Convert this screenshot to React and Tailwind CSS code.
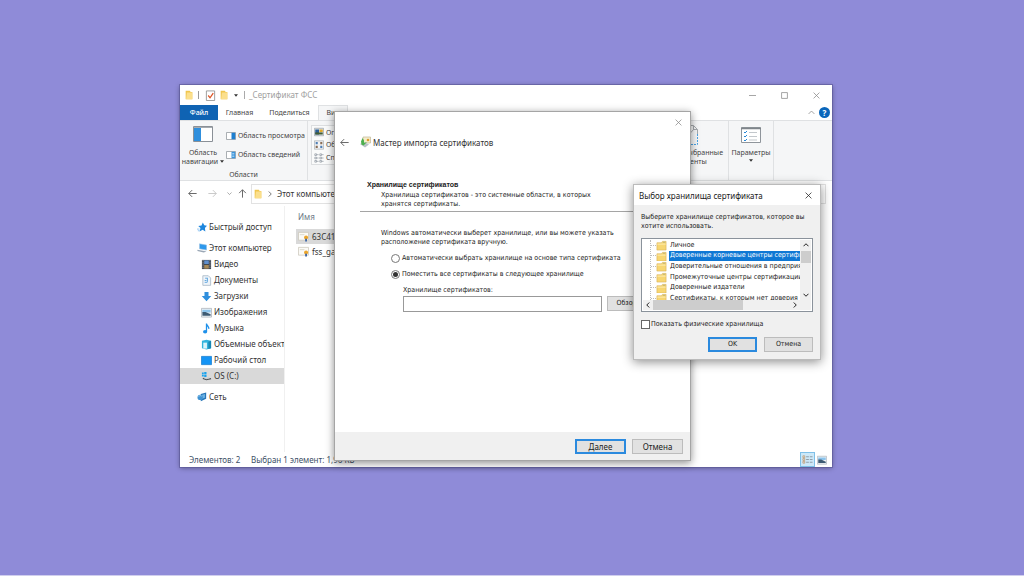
import React, { useState } from "react";
import clsx from "clsx";

const places = [
  { name: "Видео", icon: "video" },
  { name: "Документы", icon: "docs" },
  { name: "Загрузки", icon: "download" },
  { name: "Изображения", icon: "picture" },
  { name: "Музыка", icon: "music" },
  { name: "Объемные объекты", icon: "cube" },
  { name: "Рабочий стол", icon: "desktop" },
  { name: "OS (C:)", icon: "drive" },
];

const stores = [
  "Личное",
  "Доверенные корневые центры сертификации",
  "Доверительные отношения в предприятии",
  "Промежуточные центры сертификации",
  "Доверенные издатели",
  "Сертификаты, к которым нет доверия",
];

const drawings = {
  star: (
    <>
      <path d="M7 .5 8.700 4 12 4.600 9.500 7.200 10 11.300 6.800 9.200 3 11.300 4.200 7.200 1.500 4.800 5.400 4.300z" fill="#1d86dd" />
      <path d="M0 8.500h3M1 10.500h2" stroke="#7fbdf0" />
    </>
  ),
  computer: (
    <>
      <path d="M3 1 11.500 2.500v6L3 7z" fill="#2d98ec" stroke="#9cc3e4" strokeWidth=".7" />
      <path d="m.5 8 6.500 1.200 4.500 1-3.500 1.300L.5 9.500z" fill="#9aa7b5" />
    </>
  ),
  video: (
    <>
      <path d="M1 1h10v10H1z" fill="#3d4550" />
      <path d="M3.5 1.5h5v4h-5z" fill="#5f8fce" />
      <path d="M3.5 6.5h5v4h-5z" fill="#a88a58" />
      <path d="M2.2 1v10M9.8 1v10" stroke="#c8ccd2" strokeDasharray="1 1" strokeWidth=".8" />
    </>
  ),
  docs: (
    <>
      <path d="M2 .8h6l2.5 2.5v8H2z" fill="#eef4fa" stroke="#9fb0c0" strokeWidth=".8" />
      <path d="M4.500 3.500h3M7 3.500v4M4 6h2M4 8h3" stroke="#5ba3dc" />
    </>
  ),
  download: <path d="M3.800 1h4.400v4.500h3L6 11.300.8 5.500h3z" fill="#2f8fdd" />,
  picture: (
    <>
      <path d="M.5 1.500h11v9.500H.5z" fill="#eef2f5" stroke="#a8b0b8" strokeWidth=".8" />
      <path d="M1.500 3h9v3h-9z" fill="#8cc4ec" />
      <path d="M1.500 5.500 5 5.500l5.500 2.500V9.500h-9z" fill="#3e5b73" />
    </>
  ),
  music: (
    <>
      <path d="M6 .5v8.500M6 1c.5 2.500 3 2.500 2.500 5.500" fill="none" stroke="#1e90ea" strokeWidth="1.400" />
      <ellipse cx="4.500" cy="9.500" rx="2.300" ry="1.900" fill="#1e90ea" />
    </>
  ),
  cube: (
    <>
      <path d="m1 2 5-1.200 5 1.200v8l-5 1.500-5-1.500z" fill="#31b4dd" />
      <path d="M2.500 4h4v6.500h-4z" fill="#d9f4fb" />
      <path d="m8 3 3-1v8l-3 1z" fill="#1787b4" />
    </>
  ),
  desktop: <path d="M.5 1.500h11v9H.5z" fill="#1494f5" stroke="#0b73c9" strokeWidth=".7" />,
  drive: (
    <>
      <path d="M1 1.500h2v2H1zM3.500 1h2.500v2.500H3.500zM1 4h2v2H1zM3.500 4h2.500v2.500H3.500z" fill="#18a2ee" />
      <path d="m2 8 4 1.500 5-1.200" fill="none" stroke="#4d5359" strokeWidth="1.300" />
      <path d="m2 6.800 4 1.500 3-.8" fill="none" stroke="#c2c8cd" />
    </>
  ),
  network: (
    <>
      <path d="m4.500 2.500 6.500-2v7.500l-6.500 3z" fill="#2675b8" />
      <path d="m5.500 3.500 4-1.200v4.500l-4 1.500z" fill="#6fb4e4" />
      <circle cx="3.800" cy="6.500" r="3.200" fill="#3f92d2" />
      <path d="M2 5.500c1-1.500 2.500-1.500 3.500-.5" fill="none" stroke="#a9d6f3" />
    </>
  ),
  folder: (
    <>
      <path d="M2 1h5l1 1.500h2V11H2z" fill="#f0c64f" />
      <path d="M3.500 3H10v8H2.500z" fill="#fbdf8c" />
    </>
  ),
  storeFolder: (
    <>
      <path d="M1 3h5l1-1.500h4V11H1z" fill="#f7d672" stroke="#d4ad50" strokeWidth=".6" />
      <path d="M7.500 2.500h2.500" stroke="#b9b27a" />
      <path d="M1.500 4.500h9" stroke="#fdeeb5" />
    </>
  ),
  cert: (
    <>
      <path d="M.5 1.500h11v8.500H.5z" fill="#fbfaf6" stroke="#c9c5b8" strokeWidth=".8" />
      <path d="M2 4h5" stroke="#dad6c8" />
      <circle cx="8.800" cy="7" r="2.200" fill="#eba52b" />
      <path d="M7.800 8.500h2V11.500h-2z" fill="#3c66a8" />
    </>
  ),
  wizard: (
    <>
      <path d="M4 1h7.500v6H4z" fill="#f4ecca" stroke="#bfb798" strokeWidth=".7" />
      <path d="M1 8 5 6l5 2.500-4 3z" fill="#b9c2c6" />
      <path d="M2 5.500 3.500 2 5 4.500V7L8 6 4.500 9.500 2.500 8.500z" fill="#4db04d" />
      <circle cx="9" cy="4" r="1.300" fill="#dc9c32" />
    </>
  ),
  check: (
    <>
      <path d="M1.500 1h9v10.500h-9z" fill="#fff" stroke="#8d8d8d" strokeWidth=".9" />
      <path d="m3.500 6 2 2.500L9 3.500" fill="none" stroke="#dd5526" strokeWidth="1.400" />
    </>
  ),
  details: (
    <>
      <path d="M1 2h2v2H1zM1 5h2v2H1zM1 8h2v2H1z" fill="none" stroke="#c39464" strokeWidth=".8" />
      <path d="M4.500 3h3M8.500 3h3M4.500 6h3M8.500 6h3M4.500 9h3M8.500 9h3" stroke="#8a97a2" />
    </>
  ),
  list: (
    <path
      d="M1 1h2v2H1zM1 5h2v2H1zM1 9h2v2H1zM7 1h2v2H7zM7 5h2v2H7zM7 9h2v2H7zM3.500 2h2M3.500 6h2M3.500 10h2M9.500 2h2M9.500 6h2M9.500 10h2"
      fill="none"
      stroke="#87909a"
      strokeWidth=".8"
    />
  ),
  tiles: (
    <>
      <path d="M.5 1h11v10H.5z" fill="#f2f3f4" stroke="#a2a7ac" strokeWidth=".8" />
      <path d="M2 2.500h2.500v2.500H2zM7.500 7h2.500v2.500H7.500z" fill="#4f7fb4" />
      <path d="M7.500 2.500h2.500v2.500H7.500zM2 7h2.500v2.500H2z" fill="#8a6e55" />
    </>
  ),
  large: (
    <>
      <path d="M.5 1.500h11v9H.5z" fill="#dfe7ed" stroke="#969ca2" strokeWidth=".8" />
      <path d="M1.500 3h4.500v6H1.500z" fill="#2b5e94" />
      <path d="M6.500 3h4v3h-4z" fill="#e0a92c" />
      <path d="M1.500 6.500h9V9h-9z" fill="#425c33" />
    </>
  ),
};

function Icon({ name, className = "size-3" }) {
  return (
    <svg viewBox="0 0 12 12" className={clsx("shrink-0", className)} aria-hidden="true">
      {drawings[name]}
    </svg>
  );
}

function Line({ d, className }) {
  return (
    <svg viewBox="0 0 12 12" className={clsx("shrink-0", className)} fill="none" stroke="currentColor" strokeWidth="1.300" aria-hidden="true">
      <path d={d} />
    </svg>
  );
}

const CROSS = "m1 1 10 10M11 1 1 11";
const BACK = "M11.500 6H1M5.500 1.500 1 6l4.500 4.500";
const FORWARD = "M.5 6H11M6.500 1.500 11 6l-4.500 4.500";
const UP = "M6 11.500V1M1.500 5.500 6 1l4.500 4.500";
const CHEVRON_UP = "m1 8.500 5-5 5 5";
const CHEVRON_DOWN = "m1 3.500 5 5 5-5";
const CHEVRON_LEFT = "m8.500 1-5 5 5 5";
const CHEVRON_RIGHT = "m3.500 1 5 5-5 5";

function PaneIcon({ right }) {
  return (
    <svg viewBox="0 0 20 16" className="h-2 w-[10px] shrink-0" aria-hidden="true">
      <path d="M1 1h18v14H1z" fill="#fff" stroke="#8f959b" strokeWidth="1.500" />
      <path d="M11 1.500h7.500v13H11z" fill={right ? "#3b96dd" : "#1d7fd0"} />
      {right && <path d="M12.500 5h4M12.500 8h4M12.500 11h4" stroke="#fff" />}
    </svg>
  );
}

function Caret() {
  return (
    <svg viewBox="0 0 6 4" className="h-[3px] w-1 shrink-0" aria-hidden="true">
      <path d="M0 0h6L3 4z" fill="#333" />
    </svg>
  );
}

function Ribbon() {
  return (
    <div className="flex h-[61px] border-y border-[#dfe1e3] bg-[#f5f6f7] text-[7px] leading-[9px] text-[#444]">
      <div className="flex w-32 flex-col border-r border-[#dfe1e3]">
        <div className="flex flex-1 pt-[5px]">
          <button className="flex w-[46px] flex-col items-center whitespace-nowrap">
            <svg viewBox="0 0 20 16" className="mb-[6px] h-4 w-5" aria-hidden="true">
              <path d="M.5.5h19v15H.5z" fill="#fff" stroke="#8a9097" />
              <path d="M1 1h7v14H1z" fill="#2f8fdd" />
              <path d="M1 1.500h18" stroke="#a5abb1" />
            </svg>
            <span>Область</span>
            <span className="flex items-center gap-[2px]">навигации <Caret /></span>
          </button>
          <div className="flex flex-col gap-[10px] whitespace-nowrap pt-[5px]">
            <button className="flex items-center gap-[2px]"><PaneIcon /> Область просмотра</button>
            <button className="flex items-center gap-[2px]"><PaneIcon right /> Область сведений</button>
          </div>
        </div>
        <span className="pb-px text-center">Области</span>
      </div>
      <div className="ml-[3px] mt-1 flex h-10 w-20 flex-col justify-around overflow-hidden border border-[#dcdee0] bg-[#fafbfb] pl-[2px] text-left">
        <button className="flex items-center gap-[2px] whitespace-nowrap"><Icon name="large" className="size-[10px]" /> Огромные значки</button>
        <button className="flex items-center gap-[2px] whitespace-nowrap"><Icon name="tiles" className="size-[10px]" /> Обычные значки</button>
        <button className="flex items-center gap-[2px] whitespace-nowrap"><Icon name="list" className="size-[10px]" /> Список</button>
      </div>
      <div className="flex-1" />
      <button className="mr-[5px] flex w-[66px] flex-col items-center whitespace-nowrap pt-1">
        <svg viewBox="0 0 16 20" className="mb-[3px] h-5 w-4" fill="none" aria-hidden="true">
          <path d="M.5.5h11l4 4V9" stroke="#a5a9ad" />
          <path d="M11.500.5v4h4M3 14 12 4" stroke="#a5a9ad" />
          <path d="M15.500 9v10.500H.5V.5" stroke="#4ba3e3" strokeDasharray="2 1" />
        </svg>
        <span>Скрыть выбранные</span>
        <span>элементы</span>
      </button>
      <button className="flex w-[46px] flex-col items-center border-x border-[#dfe1e3] pt-[6px]">
        <svg viewBox="0 0 20 16" className="mb-[5px] h-4 w-5" fill="none" aria-hidden="true">
          <path d="M.5.5h19v15H.5z" fill="#fff" stroke="#8f959b" />
          <path d="M0 1.500h20" stroke="#7f858b" strokeWidth="1.500" />
          <path d="m3 5 1 1 2-2M3 9l1 1 2-2M3 13l1 1 2-2" stroke="#2787d6" />
          <path d="M8 5.500h8M8 9.500h8M8 13h8" stroke="#c3c8cc" />
        </svg>
        <span className="mb-[2px]">Параметры</span>
        <Caret />
      </button>
      <div className="w-[58px]" />
    </div>
  );
}

function Explorer({ children }) {
  return (
    <section className="relative bg-white font-['Noto_Sans',sans-serif] text-[8px] leading-[10px] text-[#333] shadow-[0_0_0_1px_rgba(90,86,150,0.6),0_1px_5px_rgba(0,0,0,0.4)]">
      <header className="flex h-5 items-center pl-1">
        <Icon name="folder" className="size-[10px]" />
        <span className="ml-1 h-2 border-l border-[#999]" />
        <Icon name="check" className="ml-[6px] size-[11px]" />
        <Icon name="folder" className="ml-[3px] size-[10px]" />
        <span className="ml-[5px]"><Caret /></span>
        <span className="ml-[6px] h-2 border-l border-[#aaa]" />
        <h1 className="ml-1 flex-1 text-[#a0a0a0]">_Сертификат ФСС</h1>
        <div className="flex items-center gap-[25px] pr-3 text-[#8a8a8a]">
          <button aria-label="Свернуть"><Line d="M0 6h12" className="size-[7px]" /></button>
          <button aria-label="Развернуть"><Line d="M1 1h10v10H1z" className="size-[7px]" /></button>
          <button aria-label="Закрыть"><Line d={CROSS} className="size-[7px]" /></button>
        </div>
      </header>

      <nav className="flex h-[15px] items-stretch text-[7px] text-[#444]">
        <button className="w-[38px] bg-[#0f63b3] font-medium text-white">Файл</button>
        <button className="w-[43px]">Главная</button>
        <button className="w-[57px]">Поделиться</button>
        <button className="w-[30px] border-x border-t border-[#dfe1e3] bg-[#f5f6f7]">Вид</button>
        <div className="flex flex-1 items-center justify-end gap-1 pr-[2px]">
          <Line d={CHEVRON_UP} className="size-[7px] text-[#888]" />
          <button className="size-[11px] rounded-full bg-[#0a66bb] text-[8px] font-bold leading-[11px] text-white">?</button>
        </div>
      </nav>

      <Ribbon />

      <div className="flex h-[25px] items-center pl-2 pr-[6px] text-[#666]">
        <Line d={BACK} className="size-[9px]" />
        <Line d={FORWARD} className="ml-[11px] size-[9px] text-[#c8c8c8]" />
        <Line d={CHEVRON_DOWN} className="ml-[10px] size-[5px]" />
        <Line d={UP} className="ml-[6px] size-[9px]" />
        <div className="ml-1 flex h-5 flex-1 items-center gap-1 border border-[#e2e2e2] pl-px text-[#333]">
          <Icon name="folder" className="size-[10px]" />
          <Line d={CHEVRON_RIGHT} className="size-[6px]" />
          <span>Этот компьютер</span>
        </div>
        <div className="ml-1 h-5 w-32 border border-[#e2e2e2]" />
      </div>

      <div className="flex min-h-[246px]">
        <aside className="w-[105px] border-r border-[#f0f0f0] pt-[13px]">
          <a href="#quick" className="flex h-4 items-center gap-[2px] pl-[17px]"><Icon name="star" className="size-[10px]" /> Быстрый доступ</a>
          <a href="#pc" className="mt-[5px] flex h-4 items-center gap-[2px] pl-[17px]"><Icon name="computer" className="size-[10px]" /> Этот компьютер</a>
          <ul>
            {places.map((p) => (
              <li key={p.name}>
                <a
                  href={`#${p.icon}`}
                  className={clsx("flex h-4 items-center gap-[2px] overflow-hidden whitespace-nowrap pl-[21px]", p.icon === "drive" && "bg-[#d9d9d9]")}
                >
                  <Icon name={p.icon} className="size-[11px]" /> {p.name}
                </a>
              </li>
            ))}
          </ul>
          <a href="#net" className="mt-[5px] flex h-4 items-center gap-[2px] pl-[17px]"><Icon name="network" className="size-[10px]" /> Сеть</a>
        </aside>
        <div className="flex-1 pl-[11px] pr-20 pt-[5px]">
          <table className="w-full">
            <thead>
              <tr><th className="h-[18px] pl-[2px] pt-px text-left align-top font-normal text-[#6b7785]">Имя</th></tr>
            </thead>
            <tbody>
              <tr className="bg-[#d9d9d9]">
                <td className="h-[15px] pl-[2px]"><span className="flex items-center gap-[3px]"><Icon name="cert" className="size-[11px]" />63C4195E.cer</span></td>
              </tr>
              <tr>
                <td className="h-[15px] pl-[2px]"><span className="flex items-center gap-[3px]"><Icon name="cert" className="size-[11px]" />fss_gate.cer</span></td>
              </tr>
            </tbody>
          </table>
        </div>
      </div>

      <footer className="flex h-[15px] items-center pl-[9px] text-[#3c4f66]">
        <span className="w-[62px]">Элементов: 2</span>
        <span className="flex-1">Выбран 1 элемент: 1,96 КБ</span>
        <button aria-label="Таблица" className="flex h-[15px] w-[15px] items-center justify-center border border-[#7fc0e8] bg-[#cce8f8]"><Icon name="details" className="size-[11px]" /></button>
        <button aria-label="Эскизы" className="ml-[2px] mr-[5px]"><Icon name="picture" className="size-[10px]" /></button>
      </footer>
      {children}
    </section>
  );
}

function DialogButton({ primary, className, children }) {
  return (
    <button
      className={clsx(
        "h-[15px] whitespace-nowrap bg-[#e1e1e1] text-[#222]",
        primary ? "border-2 border-[#2b8ade]" : "border border-[#bcbcbc]",
        className
      )}
    >
      {children}
    </button>
  );
}

function Radio({ id, checked, onChange, children }) {
  return (
    <label htmlFor={id} className="flex h-4 items-center gap-[2px]">
      <input
        id={id}
        type="radio"
        name="store"
        checked={checked}
        onChange={onChange}
        className="size-[9px] shrink-0 appearance-none rounded-full border border-[#777] bg-white bg-clip-content p-px checked:bg-[#333]"
      />
      {children}
    </label>
  );
}

function ImportWizard() {
  const [mode, setMode] = useState("manual");

  return (
    <section className="absolute left-[154px] top-[26px] w-[357px] border border-[#a5a5a5] bg-white font-['DejaVu_Sans_Condensed','DejaVu_Sans',sans-serif] text-[7px] leading-[9px] text-[#222] shadow-[0_2px_8px_rgba(0,0,0,0.45)]">
      <div className="flex h-5 items-center justify-end pr-2">
        <button aria-label="Закрыть" className="text-[#8a8a8a]"><Line d={CROSS} className="size-[7px]" /></button>
      </div>
      <div className="flex h-5 items-center pl-[5px] font-['Noto_Sans',sans-serif] text-[8px] text-[#333]">
        <button aria-label="Назад"><Line d={BACK} className="size-[9px] text-[#666]" /></button>
        <Icon name="wizard" className="ml-[10px] size-3" />
        <h2 className="ml-[2px]">Мастер импорта сертификатов</h2>
      </div>

      <div className="ml-[25px] mt-7 border-b border-[#a5a5a5] pb-[2px] pl-[7px]">
        <h3 className="font-['Liberation_Sans',sans-serif] font-bold">Хранилище сертификатов</h3>
        <p className="ml-[14px] mt-[2px]">
          Хранилища сертификатов - это системные области, в которых
          <br />
          хранятся сертификаты.
        </p>
      </div>

      <div className="mt-[17px] h-[203px] pl-[46px]">
        <p>
          Windows автоматически выберет хранилище, или вы можете указать
          <br />
          расположение сертификата вручную.
        </p>
        <div className="ml-[10px] mt-[3px] whitespace-nowrap">
          <Radio id="auto" checked={mode === "auto"} onChange={() => setMode("auto")}>
            Автоматически выбрать хранилище на основе типа сертификата
          </Radio>
          <Radio id="manual" checked={mode === "manual"} onChange={() => setMode("manual")}>
            Поместить все сертификаты в следующее хранилище
          </Radio>
          <div className="ml-3 mt-1">
            <label htmlFor="storeName" className="block">Хранилище сертификатов:</label>
            <div className="mt-px flex gap-[5px]">
              <input id="storeName" type="text" className="h-4 w-[199px] border border-[#999] bg-white px-1" />
              <DialogButton className="w-[45px]">Обзор...</DialogButton>
            </div>
          </div>
        </div>
      </div>

      <footer className="flex h-7 items-center justify-end gap-[6px] bg-[#f0f0f0] pr-[7px] font-['Noto_Sans',sans-serif] text-[8px]">
        <DialogButton primary className="w-[51px]">Далее</DialogButton>
        <DialogButton className="w-[51px]">Отмена</DialogButton>
      </footer>
    </section>
  );
}

function StoreDialog() {
  const [selected, setSelected] = useState(1);

  return (
    <section className="absolute left-[453px] top-[99px] w-[188px] border border-[#bbb] bg-[#f0f0f0] font-['DejaVu_Sans_Condensed','DejaVu_Sans',sans-serif] text-[7px] leading-[9px] text-[#222] shadow-[0_2px_10px_rgba(0,0,0,0.45)]">
      <header className="flex h-5 items-center justify-between bg-white pl-[5px] pr-2 font-['Noto_Sans',sans-serif] text-[8px]">
        <h2>Выбор хранилища сертификата</h2>
        <button aria-label="Закрыть"><Line d={CROSS} className="size-[7px]" /></button>
      </header>
      <div className="px-[7px] pb-[7px] pt-2">
        <p>
          Выберите хранилище сертификатов, которое вы
          <br />
          хотите использовать.
        </p>
        <div className="mt-[7px] border border-[#8a929b] bg-white p-px">
          <div className="flex h-[60px]">
            <ul className="ml-[7px] grid h-16 flex-1 grid-rows-6 overflow-hidden border-l border-dotted border-[#bbb] [clip-path:inset(0_0_4px_0)]">
              {stores.map((name, i) => (
                <li key={name} className="flex min-w-0 items-center overflow-hidden">
                  <span className="w-[5px] shrink-0 border-t border-dotted border-[#bbb]" />
                  <Icon name="storeFolder" className="size-[11px]" />
                  <button
                    onClick={() => setSelected(i)}
                    className={clsx("ml-[2px] h-full w-0 flex-1 overflow-hidden whitespace-nowrap pl-px text-left", selected === i && "bg-[#0f78d4] text-white")}
                  >
                    {name}
                  </button>
                </li>
              ))}
            </ul>
            <div className="flex w-[11px] flex-col items-center justify-between bg-[#f0f0f0] py-[2px]">
              <Line d={CHEVRON_UP} className="size-[6px] stroke-2" />
              <span className="mb-auto mt-[3px] h-3 w-[10px] bg-[#cdcdcd]" />
              <Line d={CHEVRON_DOWN} className="size-[6px] stroke-2" />
            </div>
          </div>
          <div className="flex h-[10px] items-center bg-[#f0f0f0] pl-[2px] pr-[13px]">
            <Line d={CHEVRON_LEFT} className="size-[6px] stroke-2" />
            <span className="ml-[2px] mr-auto h-[10px] w-[90px] bg-[#cdcdcd]" />
            <Line d={CHEVRON_RIGHT} className="size-[6px] stroke-2" />
          </div>
        </div>
        <label htmlFor="physical" className="mt-2 flex items-center gap-px">
          <input id="physical" type="checkbox" className="size-[9px] shrink-0 appearance-none border border-[#666] bg-white checked:bg-[#0f78d4]" />
          Показать физические хранилища
        </label>
        <div className="mt-2 flex justify-end gap-[7px]">
          <DialogButton primary className="w-[49px]">OK</DialogButton>
          <DialogButton className="w-[49px]">Отмена</DialogButton>
        </div>
      </div>
    </section>
  );
}

function App() {
  return (
    <main className="min-h-screen border-b border-[#d0ceee] bg-[#8f8bd8] pl-[180px] pr-48 pt-[85px]">
      <Explorer>
        <ImportWizard />
        <StoreDialog />
      </Explorer>
    </main>
  );
}

export default App;
